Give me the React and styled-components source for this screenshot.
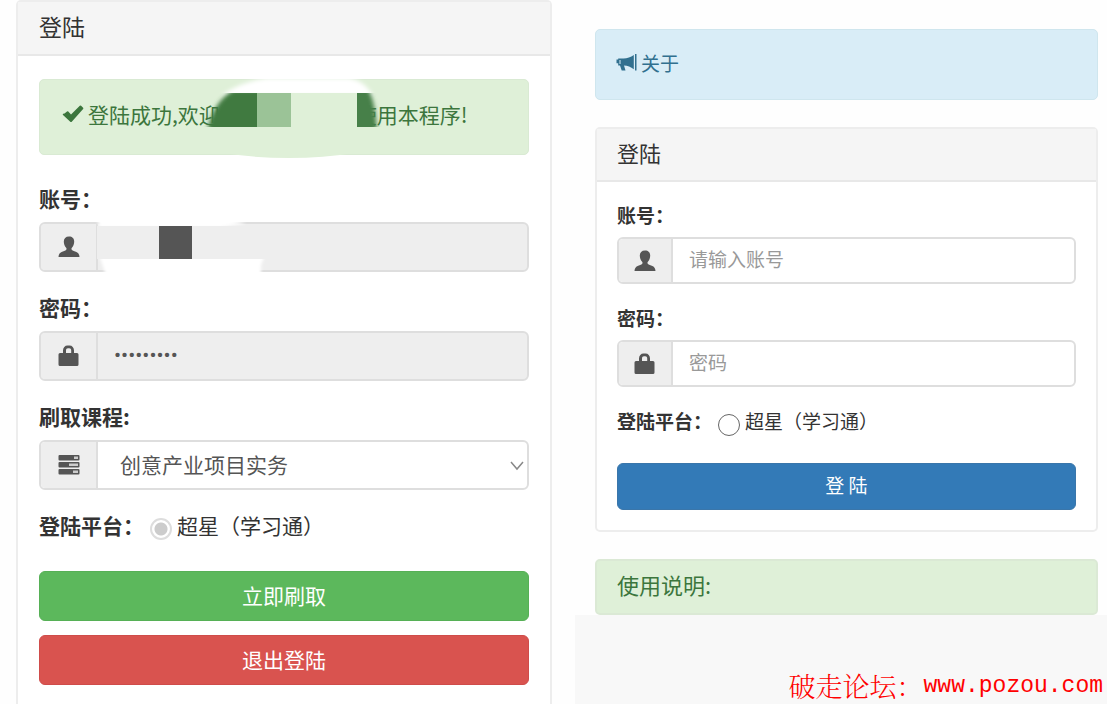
import React from "react"
import styled, { createGlobalStyle } from "styled-components"

const sans = `"Noto Sans CJK SC", "Noto Sans", sans-serif`

const GlobalStyle = createGlobalStyle`
  *, *::before, *::after {
    box-sizing: border-box;
  }

  body {
    margin: 0;
    background: #fefefe;
    color: #333;
    font-family: ${sans};
  }

  button, input, select {
    font: inherit;
  }
`

const Page = styled.main`
  display: grid;
  grid-template-columns: 575fr 532fr;
  min-height: 100vh;
`

const AccountColumn = styled.section`
  display: flex;
  padding: 0 23px 0 16px;
  font-size: 21px;
  line-height: 30px;
`

const LoginColumn = styled.section`
  display: flex;
  flex-direction: column;
  font-size: 19px;
  line-height: 28px;
`

const LoginContent = styled.div`
  display: flex;
  flex-direction: column;
  gap: 27px;
  padding: 29px 9px 0 20px;
`

const Panel = styled.div`
  flex: 1;
  min-width: 0;
  border: 2px solid #ededed;
  border-bottom-width: ${p => (p.$open ? 0 : "2px")};
  border-radius: ${p => (p.$open ? "5px 5px 0 0" : "5px")};
  background: #fff;
`

const PanelHeading = styled.h3`
  margin: 0;
  padding: ${p => (p.$large ? "9px 21px 13px" : "8px 20px 13px")};
  border-bottom: 2px solid #e8e8e8;
  background: #f5f5f5;
  font-size: ${p => (p.$large ? "23px" : "22px")};
  font-weight: 400;
  line-height: 30px;
`

const PanelBody = styled.form`
  display: flex;
  flex-direction: column;
  gap: 20px;
  padding: ${p => (p.$large ? "23px 21px 12px" : "19px 20px 20px")};
`

const tones = {
  success: { ink: "#3c763d", fill: "#dff0d8", edge: "#d9ead3" },
  info: { ink: "#31708f", fill: "#d9edf7", edge: "#cfe6ee" },
}

const Alert = styled.div`
  display: flex;
  align-items: center;
  margin-bottom: ${p => (p.$spaced ? "8px" : 0)};
  padding: ${p => (p.$spaced ? "19px 22px 25px" : "19px 19px 22px")};
  border: 1px solid ${p => tones[p.$tone].edge};
  border-radius: 5px;
  background: ${p => tones[p.$tone].fill};
  color: ${p => tones[p.$tone].ink};
  white-space: nowrap;

  svg {
    flex: none;
  }
`

const AlertText = styled.span`
  margin-left: 4px;
`

const HiddenName = styled.span`
  position: relative;
  display: inline-block;
  width: 136px;
  height: 30px;
  vertical-align: top;
`

const NameSmudge = styled.svg`
  position: absolute;
  top: -24px;
  left: -21px;
  width: 190px;
  height: 92px;
`

const Field = styled.div`
  display: flex;
  flex-direction: column;
  gap: ${p => (p.$large ? "9px" : "8px")};
`

const FieldLabel = styled.label`
  font-weight: 700;
`

const InputGroup = styled.div`
  position: relative;
  display: flex;
  height: ${p => (p.$large ? "50px" : "47px")};
  border: 2px solid #dedede;
  border-radius: 6px;
  background: ${p => (p.$disabled ? "#eee" : "#fff")};
`

const Addon = styled.span`
  display: flex;
  flex: none;
  align-items: center;
  justify-content: center;
  width: ${p => (p.$large ? "57px" : "54px")};
  border-right: 2px solid #dedede;
  border-radius: 4px 0 0 4px;
  background: #eee;
  color: #555;
`

const TextInput = styled.input`
  flex: 1;
  min-width: 0;
  padding: 0 16px 3px;
  border: 0;
  background: transparent;
  color: #555;

  &::placeholder {
    color: #999;
    opacity: 1;
  }

  &[type="password"]:disabled {
    font-family: Roboto, ${sans};
  }
`

const Select = styled.select`
  flex: 1;
  min-width: 0;
  padding: 0 40px 3px 22px;
  border: 0;
  background: transparent;
  color: #555;
  appearance: none;
`

const SelectArrow = styled.svg`
  position: absolute;
  top: 18px;
  right: 3px;
  width: 14px;
  height: 12px;
  pointer-events: none;
`

const AccountSmudge = styled.svg`
  position: absolute;
  top: -5px;
  left: 49px;
  width: 190px;
  height: 58px;
`

const Platform = styled.fieldset`
  display: flex;
  align-items: center;
  margin: 0;
  padding: 0;
  border: 0;
  white-space: nowrap;
`

const PlatformTitle = styled.span`
  font-weight: 700;
`

const PlatformOption = styled.label`
  display: flex;
  align-items: center;
  gap: 5px;
  height: 28px;
  margin-left: 6px;
`

const Radio = styled.input`
  appearance: none;
  width: 22px;
  height: 22px;
  margin: 8px 0 0;
  border: 1px solid #666;
  border-radius: 50%;
  background: #fff;

  &:disabled {
    border: 2px solid #ddd;
  }

  &:disabled:checked {
    background: radial-gradient(circle, #ccc 0 6px, #fff 7px);
  }
`

const Actions = styled.div`
  display: flex;
  flex-direction: column;
  gap: 14px;
  padding-top: ${p => (p.$large ? "11px" : "8px")};
`

const buttonColors = {
  success: ["#5cb85c", "#56b056"],
  danger: ["#d9534f", "#cf4c4a"],
  primary: ["#337ab7", "#3a76aa"],
}

const Button = styled.button`
  height: ${p => (p.$large ? "50px" : "47px")};
  padding: 0 12px 3px;
  border: 1px solid ${p => buttonColors[p.$tone][1]};
  border-radius: 6px;
  background: ${p => buttonColors[p.$tone][0]};
  color: #fff;
`

const Notice = styled.h3`
  margin: 0;
  padding: 8px 20px 14px;
  border: 2px solid #dbe9d5;
  border-radius: 5px;
  background: #dff0d8;
  color: #3c763d;
  font-size: 22px;
  font-weight: 400;
  line-height: 30px;
`

const Footer = styled.footer`
  display: flex;
  flex: 1;
  align-items: flex-end;
  justify-content: flex-end;
  padding-right: 4px;
  background: #f8f8f8;
  color: #f00;
  font-family: "Noto Serif CJK SC", "Noto Sans CJK SC", serif;
  font-size: 27px;
  font-weight: 300;
  line-height: 36px;
  white-space: nowrap;
`

const SiteLink = styled.a`
  color: inherit;
  font-family: "Liberation Mono", monospace;
  font-size: 23px;
  text-decoration: none;
`

const Icon = ({ children, size = 22 }) => (
  <svg
    width={size}
    height={size}
    viewBox="0 0 22 22"
    fill="currentColor"
    aria-hidden="true"
  >
    {children}
  </svg>
)

const UserIcon = () => (
  <Icon>
    <path d="M11 0.500c-3.300 0-5.200 2-5.200 5 0 2.500.9 4.800 2.300 6.200.6.6.6 1.700 0 2.200-.9.800-2.700 1.300-4.500 2.100C1.500 16.900.700 18.500.5 21h21c-.2-2.500-1-4.100-3.100-5-1.800-.8-3.600-1.300-4.500-2.100-.6-.5-.6-1.600 0-2.200 1.400-1.400 2.300-3.700 2.300-6.200 0-3-1.900-5-5.200-5z" />
  </Icon>
)

const LockIcon = () => (
  <Icon>
    <path
      fillRule="evenodd"
      d="M5 8V5.500C5 2.500 7 .5 9.500.5h2C14.200.5 16 2.500 16 5.500V8h3q1.500 0 1.500 1.500v10q0 1.500-1.500 1.500H2q-1.500 0-1.500-1.500v-10Q.5 8 2 8zM8 8h5.200V5.500c0-1.500-.8-2.300-2-2.300H10C8.800 3.200 8 4 8 5.500z"
    />
  </Icon>
)

const TasksIcon = () => (
  <Icon>
    {[1, 8, 15].map((y, i) => (
      <g key={y}>
        <rect x="0.500" y={y} width="21" height="5.500" rx="1" />
        <rect
          x={[16, 11, 15][i]}
          y={y + 1.500}
          width={[4, 9, 5][i]}
          height="2.500"
          fill="#ccc"
        />
      </g>
    ))}
  </Icon>
)

const CheckIcon = () => (
  <Icon>
    <path d="M2.500 10.500 5 8.500q.7-.5 1.300.1L9 11.500 17.800 2.800q.7-.6 1.300 0l2 2q.6.7 0 1.300L10 18.500q-1 1-2 0L1 12q-.7-.8.2-1.300z" />
  </Icon>
)

const BullhornIcon = () => (
  <Icon>
    <path d="M20 2h1.500v16.500H20zM18.800 3v14.300c-3-2.300-6.300-3.500-9.800-3.700l1.500 5H6.700L5 13.500H3.200V11.200H1.500V7.500h1.700v-1H8.500c3.800-.2 7.200-1.300 10.300-3.500z" />
    <path d="M5 8v4" stroke="#d9edf7" />
  </Icon>
)

const App = () => (
  <>
    <GlobalStyle />
    <Page>
      <AccountColumn>
        <Panel $open>
          <PanelHeading $large>登陆</PanelHeading>
          <PanelBody $large onSubmit={e => e.preventDefault()}>
            <Alert $tone="success" $spaced role="status">
              <CheckIcon />
              <AlertText>
                登陆成功,欢迎
                <HiddenName>
                  <NameSmudge viewBox="200 75 190 92" aria-hidden="true">
                    <defs>
                      <filter id="soft" x="-20%" y="-40%" width="140%" height="180%">
                        <feGaussianBlur stdDeviation="2" />
                      </filter>
                      <clipPath id="strip">
                        <rect x="358" y="93" width="32" height="34" />
                      </clipPath>
                      <clipPath id="left">
                        <rect x="200" y="93" width="58" height="34" />
                      </clipPath>
                    </defs>
                    <path
                      d="M222 96Q240 82 268 78h82q16 3 24 18z"
                      fill="#fff"
                      filter="url(#soft)"
                    />
                    <path
                      d="M225 153h130q-30 5-65 5t-65-5z"
                      fill="#dff0d8"
                    />
                    <rect x="240" y="93" width="120" height="34" fill="#dff0d8" />
                    <g clipPath="url(#left)">
                      <path
                        d="M209 128q5-25 25-38h35v42h-60z"
                        fill="#3f7a40"
                        filter="url(#soft)"
                      />
                    </g>
                    <rect x="258" y="93" width="34" height="34" fill="#9bc397" />
                    <g clipPath="url(#strip)">
                      <path
                        d="M345 84h21q11 14 12 50h-33z"
                        fill="#47804a"
                        filter="url(#soft)"
                      />
                    </g>
                  </NameSmudge>
                </HiddenName>
                使用本程序!
              </AlertText>
            </Alert>
            <Field $large>
              <FieldLabel htmlFor="account">账号：</FieldLabel>
              <InputGroup $large $disabled>
                <Addon $large>
                  <UserIcon />
                </Addon>
                <TextInput id="account" type="text" disabled />
                <AccountSmudge viewBox="90 219 190 58" aria-hidden="true">
                  <defs>
                    <filter id="edge" x="-10%" y="-50%" width="120%" height="200%">
                      <feGaussianBlur stdDeviation="1.500" />
                    </filter>
                    <clipPath id="outside">
                      <path d="M90 215h190v11H90zM90 259h190v18H90z" />
                    </clipPath>
                  </defs>
                  <g clipPath="url(#outside)" fill="#fff">
                    <path d="M96 216h120l30 7-28 5H100z" filter="url(#edge)" />
                    <path
                      d="M99 255h166l-4 10v18H105v-10q-2-7-6-18z"
                      filter="url(#edge)"
                    />
                  </g>
                  <rect x="97" y="226" width="150" height="33" fill="#eee" />
                  <rect x="159" y="226" width="33" height="33" fill="#555" />
                </AccountSmudge>
              </InputGroup>
            </Field>
            <Field $large>
              <FieldLabel htmlFor="account-password">密码：</FieldLabel>
              <InputGroup $large $disabled>
                <Addon $large>
                  <LockIcon />
                </Addon>
                <TextInput
                  id="account-password"
                  type="password"
                  defaultValue="123456789"
                  disabled
                />
              </InputGroup>
            </Field>
            <Field $large>
              <FieldLabel htmlFor="course">刷取课程:</FieldLabel>
              <InputGroup $large>
                <Addon $large>
                  <TasksIcon />
                </Addon>
                <Select id="course">
                  <option>创意产业项目实务</option>
                </Select>
                <SelectArrow viewBox="0 0 14 12" aria-hidden="true">
                  <path d="M1 2l6 7 6-7" fill="none" stroke="#888" strokeWidth="1.500" />
                </SelectArrow>
              </InputGroup>
            </Field>
            <Platform aria-label="登陆平台">
              <PlatformTitle>登陆平台：</PlatformTitle>
              <PlatformOption>
                <Radio type="radio" name="current-platform" defaultChecked disabled />
                超星（学习通）
              </PlatformOption>
            </Platform>
            <Actions $large>
              <Button $large $tone="success" type="submit">
                立即刷取
              </Button>
              <Button $large $tone="danger" type="button">
                退出登陆
              </Button>
            </Actions>
          </PanelBody>
        </Panel>
      </AccountColumn>

      <LoginColumn>
        <LoginContent>
          <Alert $tone="info">
            <BullhornIcon />
            <AlertText>关于</AlertText>
          </Alert>
          <Panel>
            <PanelHeading>登陆</PanelHeading>
            <PanelBody onSubmit={e => e.preventDefault()}>
              <Field>
                <FieldLabel htmlFor="login-name">账号：</FieldLabel>
                <InputGroup>
                  <Addon>
                    <UserIcon />
                  </Addon>
                  <TextInput id="login-name" type="text" placeholder="请输入账号" />
                </InputGroup>
              </Field>
              <Field>
                <FieldLabel htmlFor="login-password">密码：</FieldLabel>
                <InputGroup>
                  <Addon>
                    <LockIcon />
                  </Addon>
                  <TextInput
                    id="login-password"
                    type="password"
                    placeholder="密码"
                  />
                </InputGroup>
              </Field>
              <Platform aria-label="登陆平台">
                <PlatformTitle>登陆平台：</PlatformTitle>
                <PlatformOption>
                  <Radio type="radio" name="platform" />
                  超星（学习通）
                </PlatformOption>
              </Platform>
              <Actions>
                <Button $tone="primary" type="submit">
                  登 陆
                </Button>
              </Actions>
            </PanelBody>
          </Panel>
          <Notice>使用说明:</Notice>
        </LoginContent>
        <Footer>
          破走论坛：<SiteLink href="http://www.pozou.com">www.pozou.com</SiteLink>
        </Footer>
      </LoginColumn>
    </Page>
  </>
)

export default App
